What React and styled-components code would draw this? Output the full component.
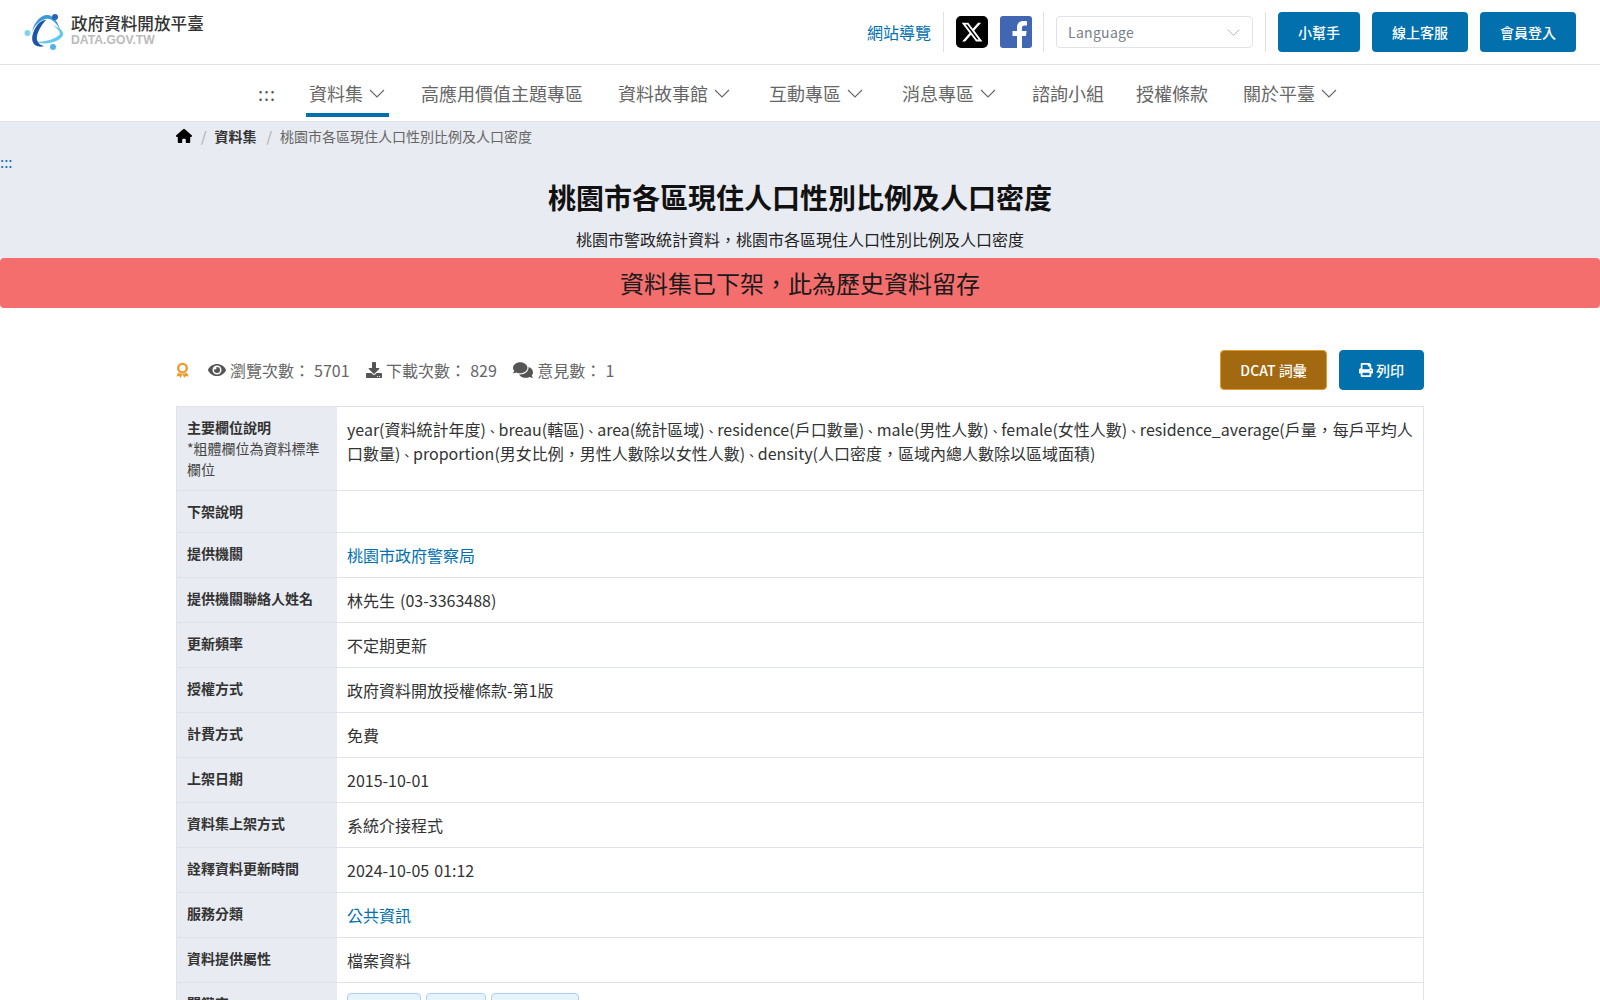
import React from 'react';
import styled, { createGlobalStyle } from 'styled-components';
import { FaEye, FaDownload, FaComments, FaPrint } from 'react-icons/fa';
import { FaHouse } from 'react-icons/fa6';

const cjk = `"Noto Sans CJK TC", "Noto Sans", sans-serif`;

const GlobalStyle = createGlobalStyle`
	* { box-sizing: border-box; }
	html, body { margin: 0; padding: 0; background: #fff; }
	body { font-family: ${cjk}; color: #333; overflow-x: hidden; }
`;

const TopBar = styled.header`
	height: 65px;
	display: flex;
	align-items: center;
	justify-content: space-between;
	padding: 0 24px;
	border-bottom: 1px solid #dfe1eb;
`;

const Brand = styled.a`
	display: flex;
	align-items: center;
	gap: 3px;
`;

const BrandText = styled.div`
	display: flex;
	flex-direction: column;
	margin-top: -4px;
`;

const BrandName = styled.span`
	font-size: 16.6px;
	line-height: 19px;
	color: #333;
	font-weight: 500;
`;

const BrandUrl = styled.span`
	font-family: "Liberation Sans", sans-serif;
	font-size: 12.2px;
	line-height: 14px;
	font-weight: 700;
	color: #bbb;
`;

const TopRight = styled.div`
	display: flex;
	align-items: center;
`;

const SiteMapLink = styled.a`
	font-size: 16px;
	color: #0170ad;
	padding-right: 12px;
`;

const SocialGroup = styled.div`
	display: flex;
	gap: 12px;
	padding: 0 11px 0 12px;
	height: 40px;
	align-items: center;
	border-left: 1px solid #dfe1eb;
	border-right: 1px solid #dfe1eb;
`;

const LanguageBox = styled.div`
	width: 197px;
	height: 32px;
	margin: 0 12px;
	padding: 0 11px;
	display: flex;
	align-items: center;
	justify-content: space-between;
	border: 1px solid #dfe1eb;
	border-radius: 4px;
	font-size: 14px;
	color: #7a7f87;
	letter-spacing: 0.3px;
`;

const ButtonGroup = styled.div`
	display: flex;
	gap: 12px;
	padding-left: 12px;
	border-left: 1px solid #dfe1eb;
`;

const HeaderButton = styled.a`
	width: ${(p) => p.$w}px;
	height: 40px;
	display: flex;
	align-items: center;
	justify-content: center;
	background: #0170ad;
	color: #fff;
	font-size: 14px;
	font-weight: 500;
	border-radius: 4px;
`;

const Nav = styled.nav`
	height: 57px;
	display: flex;
	align-items: center;
	padding-left: 258px;
	border-bottom: 1px solid #dfe1eb;
`;

const NavDots = styled.span`
	width: 48px;
	font-size: 18px;
	letter-spacing: 1px;
	color: #555;
`;

const NavItem = styled.a`
	height: 100%;
	display: flex;
	align-items: center;
	gap: 6px;
	padding: 0 3px;
	margin-right: ${(p) => p.$gap}px;
	font-size: 18px;
	color: #666;
	position: relative;
	${(p) => p.$active && `
		&::after {
			content: '';
			position: absolute;
			left: 0;
			right: 0;
			bottom: 4px;
			height: 4px;
			background: #0170ad;
		}
	`}
`;

const Chevron = styled.svg`
	width: ${(p) => p.$size || 16}px;
	height: 9px;
	margin-right: 1px;
	color: ${(p) => p.$color || '#666'};
	flex: none;
`;

const Hero = styled.section`
	background: #e8ebf1;
	height: 136px;
	display: flex;
	flex-direction: column;
	align-items: center;
`;

const Crumbs = styled.div`
	align-self: stretch;
	padding: 0 176px;
	height: 28px;
	display: flex;
	align-items: center;
	gap: 8px;
	font-size: 14px;
	color: #666;
	svg { margin-right: 1px; }
`;

const CrumbStrong = styled.b`
	margin-right: 2px;
	color: #333;
	font-weight: 700;
`;

const CrumbSep = styled.span`
	color: #aaa;
`;

const SkipDots = styled.div`
	align-self: flex-start;
	margin-top: 5px;
	height: 14px;
	line-height: 14px;
	font-size: 15px;
	color: #0170ad;
`;

const Title = styled.h1`
	margin: 9px 0 0;
	font-size: 28px;
	line-height: 38px;
	font-weight: 700;
	color: #111;
`;

const Subtitle = styled.p`
	margin: 11px 0 0;
	font-size: 16px;
	line-height: 24px;
	color: #222;
`;

const Removed = styled.div`
	height: 50px;
	padding-bottom: 2px;
	background: #f56e6e;
	border-radius: 4px;
	display: flex;
	align-items: center;
	justify-content: center;
	font-size: 24px;
	color: #1a1a1a;
`;

const Content = styled.main`
	width: 1248px;
	margin: 42px auto 0;
`;

const StatBar = styled.div`
	height: 40px;
	display: flex;
	align-items: center;
	margin-bottom: 16px;
`;

const Stats = styled.div`
	flex: 1;
	display: flex;
	align-items: center;
	font-size: 16px;
	word-spacing: 0.5px;
	color: #666;
`;

const Stat = styled.span`
	display: flex;
	align-items: center;
	gap: 4px;
	margin-right: 16.5px;
	svg { color: #555; font-size: ${(p) => p.$icon}px; }
`;

const Medal = styled.svg`
	width: 13px;
	height: 17px;
	margin-right: 19px;
`;

const ActionButton = styled.a`
	height: 40px;
	width: ${(p) => p.$w}px;
	margin-left: 12px;
	display: flex;
	align-items: center;
	justify-content: center;
	gap: 3px;
	background: ${(p) => p.$bg};
	border: 1px solid ${(p) => p.$line};
	border-radius: 4px;
	color: #fff;
	font-size: 14px;
	font-weight: 500;
`;

const Table = styled.div`
	border: 1px solid #dfe1eb;
	border-bottom: 0;
`;

const Row = styled.div`
	display: grid;
	grid-template-columns: 160px 1fr;
	min-height: ${(p) => p.$h || 45}px;
	border-bottom: 1px solid #dfe1eb;
`;

const Label = styled.div`
	background: #e8ebf1;
	padding: 10px;
	font-size: 14px;
	line-height: 21px;
	font-weight: 700;
	color: #333;
`;

const LabelNote = styled.span`
	display: block;
	font-weight: 400;
	color: #444;
`;

const Value = styled.div`
	padding: 10px;
	font-size: 16px;
	line-height: 24px;
	word-spacing: 1.5px;
	color: #333;
`;

const ValueLink = styled.a`
	color: #0170ad;
`;

const ListComma = styled.span`
	font-size: 12.6px;
	line-height: 1;
`;

const TagList = styled.div`
	display: flex;
	gap: 5px;
`;

const Tag = styled.span`
	width: ${(p) => p.$w}px;
	height: 32px;
	background: #e7f2fd;
	border: 1px solid #a9d2f5;
	border-radius: 4px;
`;

const ChevronDown = ({ size, color }) => (
	<Chevron $size={size} $color={color} viewBox="0 0 16 9" fill="none" stroke="currentColor" strokeWidth="1.1">
		<path d="M1 1l7 7 7-7" />
	</Chevron>
);

const LogoMark = () => (
	<svg width="44" height="44" viewBox="0 0 44 44">
		<path d="M12 32C20 32 33 29 36 24C36 21 32 17 28 15C34 17 40 20 39 25C37 31 22 36 12 32Z" fill="#63c8ec" />
		<path d="M8 22C10 11 18 4 24 5C30 6 34 12 36 20C32 12 27 8 22 9C16 10 11 15 8 22Z" fill="#3d9ad9" />
		<path d="M14 14C8 22 6 31 11 35C14 37 18 37 20 36C15 35 12 31 13 26C14 21 18 14 22 10C19 10 16 12 14 14Z" fill="#1c55a8" />
		<circle cx="31" cy="7" r="3" fill="#2a62b4" />
		<circle cx="3.500" cy="23" r="3" fill="#7ed3f0" />
		<circle cx="29" cy="37" r="3" fill="#4cb4e6" />
	</svg>
);

const XLogo = () => (
	<svg width="32" height="32" viewBox="0 0 32 32">
		<rect width="32" height="32" rx="5" fill="#000" />
		<path
			transform="translate(4.500 4.500) scale(0.96)"
			fill="#fff"
			d="M18.244 2.25h3.308l-7.227 8.26 8.502 11.24H16.17l-5.214-6.817L4.99 21.75H1.68l7.73-8.835L1.254 2.25H8.08l4.713 6.231zm-1.161 17.52h1.833L7.084 4.126H5.117z"
		/>
	</svg>
);

const FacebookLogo = () => (
	<svg width="32" height="32" viewBox="0 0 32 32">
		<rect width="32" height="32" rx="3" fill="#4267b2" />
		<path d="M22 32V20h4l.6-5H22v-3c0-1.500.5-2.500 2.500-2.500H27V5.200C26.500 5.100 25 5 23.400 5 20 5 17 7 17 11.500V15h-4.500v5H17v12z" fill="#fff" />
	</svg>
);

const fields = [
	'year(資料統計年度)',
	'breau(轄區)',
	'area(統計區域)',
	'residence(戶口數量)',
	'male(男性人數)',
	'female(女性人數)',
	'residence_average(戶量，每戶平均人口數量)',
	'proportion(男女比例，男性人數除以女性人數)',
	'density(人口密度，區域內總人數除以區域面積)',
];

const rows = [
	['提供機關', '桃園市政府警察局', true],
	['提供機關聯絡人姓名', '林先生 (03-3363488)'],
	['更新頻率', '不定期更新'],
	['授權方式', '政府資料開放授權條款-第1版'],
	['計費方式', '免費'],
	['上架日期', '2015-10-01'],
	['資料集上架方式', '系統介接程式'],
	['詮釋資料更新時間', '2024-10-05 01:12'],
	['服務分類', '公共資訊', true],
	['資料提供屬性', '檔案資料'],
];

export default function App() {
	return (
		<>
			<GlobalStyle />
			<TopBar>
				<Brand>
					<LogoMark />
					<BrandText>
						<BrandName>政府資料開放平臺</BrandName>
						<BrandUrl>DATA.GOV.TW</BrandUrl>
					</BrandText>
				</Brand>
				<TopRight>
					<SiteMapLink>網站導覽</SiteMapLink>
					<SocialGroup>
						<XLogo />
						<FacebookLogo />
					</SocialGroup>
					<LanguageBox>
						Language
						<ChevronDown size={13} color="#a8acb3" />
					</LanguageBox>
					<ButtonGroup>
						<HeaderButton $w={82}>小幫手</HeaderButton>
						<HeaderButton $w={96}>線上客服</HeaderButton>
						<HeaderButton $w={96}>會員登入</HeaderButton>
					</ButtonGroup>
				</TopRight>
			</TopBar>
			<Nav>
				<NavDots>:::</NavDots>
				<NavItem $active $gap={29}>資料集<ChevronDown /></NavItem>
				<NavItem $gap={29}>高應用價值主題專區</NavItem>
				<NavItem $gap={32}>資料故事館<ChevronDown /></NavItem>
				<NavItem $gap={32}>互動專區<ChevronDown /></NavItem>
				<NavItem $gap={29}>消息專區<ChevronDown /></NavItem>
				<NavItem $gap={26}>諮詢小組</NavItem>
				<NavItem $gap={29}>授權條款</NavItem>
				<NavItem $gap={0}>關於平臺<ChevronDown /></NavItem>
			</Nav>
			<Hero>
				<Crumbs>
					<FaHouse size={16} color="#000" />
					<CrumbSep>/</CrumbSep>
					<CrumbStrong>資料集</CrumbStrong>
					<CrumbSep>/</CrumbSep>
					桃園市各區現住人口性別比例及人口密度
				</Crumbs>
				<SkipDots>:::</SkipDots>
				<Title>桃園市各區現住人口性別比例及人口密度</Title>
				<Subtitle>桃園市警政統計資料，桃園市各區現住人口性別比例及人口密度</Subtitle>
			</Hero>
			<Removed>資料集已下架，此為歷史資料留存</Removed>
			<Content>
				<StatBar>
					<Stats>
						<Medal viewBox="0 0 14 17">
							<circle cx="7" cy="6" r="4.600" fill="none" stroke="#ea9c32" strokeWidth="2.600" />
							<path d="M2 11l-1.500 4 3-.5 1.500 2 2-4zM12 11l1.500 4-3-.5-1.500 2-2-4z" fill="#ea9c32" />
						</Medal>
						<Stat $icon={18}><FaEye />瀏覽次數： 5701</Stat>
						<Stat $icon={16}><FaDownload />下載次數： 829</Stat>
						<Stat $icon={20}><FaComments />意見數： 1</Stat>
					</Stats>
					<ActionButton $w={107} $bg="#a26911" $line="#e09b2d">DCAT 詞彙</ActionButton>
					<ActionButton $w={85} $bg="#0170ad" $line="#0170ad"><FaPrint />列印</ActionButton>
				</StatBar>
				<Table>
					<Row>
						<Label>
							主要欄位說明
							<LabelNote>*粗體欄位為資料標準欄位</LabelNote>
						</Label>
						<Value>
							{fields.map((field, i) => (
								<React.Fragment key={field}>
									{i > 0 && <ListComma>、</ListComma>}
									{field}
								</React.Fragment>
							))}
						</Value>
					</Row>
					<Row $h={42}>
						<Label>下架說明</Label>
						<Value />
					</Row>
					{rows.map(([label, value, link]) => (
						<Row key={label}>
							<Label>{label}</Label>
							<Value>{link ? <ValueLink>{value}</ValueLink> : value}</Value>
						</Row>
					))}
					<Row>
						<Label>關鍵字</Label>
						<Value>
							<TagList>
								<Tag $w={74} />
								<Tag $w={60} />
								<Tag $w={88} />
							</TagList>
						</Value>
					</Row>
				</Table>
			</Content>
		</>
	);
}
